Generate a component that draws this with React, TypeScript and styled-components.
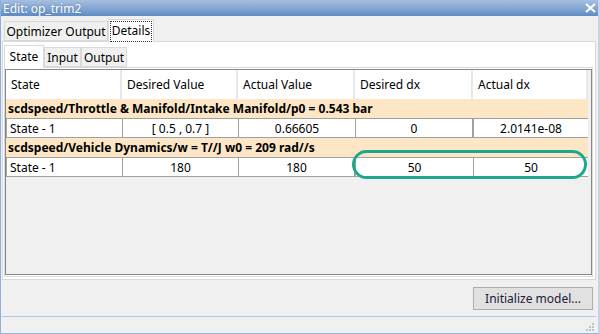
import { createGlobalStyle } from 'styled-components'
import styled from 'styled-components'

const GlobalStyle = createGlobalStyle`
  body {
    margin: 0;
    font-family: 'Segoe UI', 'Noto Sans', sans-serif;
    font-size: 11px;
    color: #000;
  }
`

const Window = styled.div`
  width: 600px;
  height: 334px;
  box-sizing: border-box;
  background: #f0f0f0;
  border-left: 1px solid #8eb0d8;
  border-right: 2px solid #c4d4e6;
  border-bottom: 1px solid #9ab6d8;
  display: flex;
  flex-direction: column;
  overflow: hidden;
`

const TitleBar = styled.div`
  height: 16px;
  flex: none;
  margin-left: -1px;
  margin-right: -2px;
  background: linear-gradient(#a6bfdf, #7fa3d1 60%, #5d8bc6);
  display: flex;
  align-items: center;
  justify-content: space-between;
  padding: 0 4px 0 3px;
  color: #fff;
  font-size: 12px;
  text-shadow: 0 0 2px rgba(40, 70, 120, 0.5);
`

const Body = styled.div`
  flex: 1;
  display: flex;
  flex-direction: column;
  padding: 0 2px 0 1px;
`

const TabStrip = styled.div`
  display: flex;
  align-items: flex-end;
  height: 25px;
  flex: none;
  padding-left: ${(p: { $indent: number }) => p.$indent}px;
`

const Tab = styled.div<{ $active?: boolean; $w: number }>`
  width: ${(p) => p.$w}px;
  box-sizing: border-box;
  height: ${(p) => (p.$active ? 23 : 20)}px;
  margin-bottom: ${(p) => (p.$active ? -1 : 0)}px;
  background: ${(p) => (p.$active ? '#fff' : '#f0f0f0')};
  border: 1px solid #d9d9d9;
  border-bottom: ${(p) => (p.$active ? 'none' : '1px solid #d9d9d9')};
  display: flex;
  align-items: center;
  justify-content: center;
  font-size: 12px;
  position: relative;
  z-index: ${(p) => (p.$active ? 1 : 0)};
  padding-bottom: ${(p) => (p.$active ? 2 : 0)}px;
`

const Focus = styled.span`
  position: absolute;
  inset: 1px 1px 0 1px;
  border: 1px dotted #333;
`

const Panel = styled.div<{ $pad: string }>`
  flex: 1;
  display: flex;
  flex-direction: column;
  background: #fff;
  border: 1px solid #d9d9d9;
  padding: ${(p) => p.$pad};
`

const Table = styled.div`
  flex: 1;
  position: relative;
  background: #f0f0f0;
  border: 1px solid #828790;
  padding-right: 3px;
`

const Grid = styled.div`
  display: grid;
  grid-template-columns: 116px 116px 117px 118px 115px;
`

const HeadCell = styled.div`
  height: 29px;
  background: #fff;
  border-right: 2px solid #e8e8e8;
  display: flex;
  align-items: center;
  padding-left: 5px;
  font-size: 12px;
  box-sizing: border-box;
  &:last-child {
    border-right: none;
  }
`

const GroupRow = styled.div`
  grid-column: 1 / -1;
  height: 19px;
  background: #fce6c6;
  font-weight: bold;
  font-size: 12px;
  display: flex;
  align-items: center;
  padding-left: 2px;
  box-sizing: border-box;
`

const Cell = styled.div<{ $left?: boolean }>`
  height: 20px;
  box-sizing: border-box;
  background: #fff;
  border-left: 1px solid #a0a0a0;
  border-top: 1px solid #a0a0a0;
  border-bottom: 1px solid #a0a0a0;
  display: flex;
  align-items: center;
  justify-content: ${(p) => (p.$left ? 'flex-start' : 'center')};
  padding-left: ${(p) => (p.$left ? 3 : 0)}px;
  font-size: 12px;
  &:nth-child(5n) {
    border-right: 1px solid #a0a0a0;
  }
`

const Highlight = styled.div`
  position: absolute;
  left: 346px;
  top: 80px;
  width: 235px;
  height: 29px;
  box-sizing: border-box;
  border: 3px solid #1ca98b;
  border-radius: 15px;
`

const Footer = styled.div`
  height: 36px;
  flex: none;
  display: flex;
  align-items: center;
  justify-content: flex-end;
  padding-right: 3px;
  border-bottom: 1px solid #b4c8e0;
`

const Button = styled.button`
  width: 120px;
  height: 23px;
  background: #e1e1e1;
  border: 1px solid #adadad;
  font-family: inherit;
  font-size: 12px;
  color: #1a1a3a;
  padding: 0;
`

const StatusBar = styled.div`
  height: 16px;
  flex: none;
  display: flex;
  justify-content: flex-end;
  align-items: flex-end;
  padding: 0 2px 2px 0;
  box-sizing: border-box;
`

const cols = ['State', 'Desired Value', 'Actual Value', 'Desired dx', 'Actual dx']

const groups = [
  {
    name: 'scdspeed/Throttle & Manifold/Intake Manifold/p0 = 0.543 bar',
    row: ['State - 1', '[ 0.5 , 0.7 ]', '0.66605', '0', '2.0141e-08'],
  },
  {
    name: 'scdspeed/Vehicle Dynamics/w = T//J w0 = 209 rad//s',
    row: ['State - 1', '180', '180', '50', '50'],
  },
]

const App = () => {
  return (
    <>
      <GlobalStyle />
      <Window>
        <TitleBar>
          <span>Edit: op_trim2</span>
          <svg width="11" height="10" viewBox="0 0 11 10">
            <path d="M1 1 L10 9 M10 1 L1 9" stroke="#fff" strokeWidth="2" />
          </svg>
        </TitleBar>
        <Body>
          <TabStrip $indent={2}>
            <Tab $w={104}>Optimizer Output</Tab>
            <Tab $w={46} $active>
              <Focus />
              Details
            </Tab>
          </TabStrip>
          <Panel $pad="0 2px 2px 1px">
            <TabStrip $indent={0}>
              <Tab $w={40} $active>
                State
              </Tab>
              <Tab $w={37}>Input</Tab>
              <Tab $w={46}>Output</Tab>
            </TabStrip>
            <Panel $pad="1px 0 1px 0">
              <Table>
                <Grid>
                  {cols.map((c) => (
                    <HeadCell key={c}>{c}</HeadCell>
                  ))}
                  {groups.map((g) => (
                    <>
                      <GroupRow key={g.name}>{g.name}</GroupRow>
                      {g.row.map((v, i) => (
                        <Cell key={g.name + i} $left={i === 0}>
                          {v}
                        </Cell>
                      ))}
                    </>
                  ))}
                </Grid>
                <Highlight />
              </Table>
            </Panel>
          </Panel>
          <Footer>
            <Button>Initialize model...</Button>
          </Footer>
          <StatusBar>
            <svg width="8" height="8" viewBox="0 0 8 8">
              {[
                [6, 0],
                [6, 3],
                [3, 3],
                [6, 6],
                [3, 6],
                [0, 6],
              ].map(([x, y]) => (
                <rect key={`${x}-${y}`} x={x} y={y} width="2" height="2" fill="#b8c4d0" />
              ))}
            </svg>
          </StatusBar>
        </Body>
      </Window>
    </>
  )
}

export default App
